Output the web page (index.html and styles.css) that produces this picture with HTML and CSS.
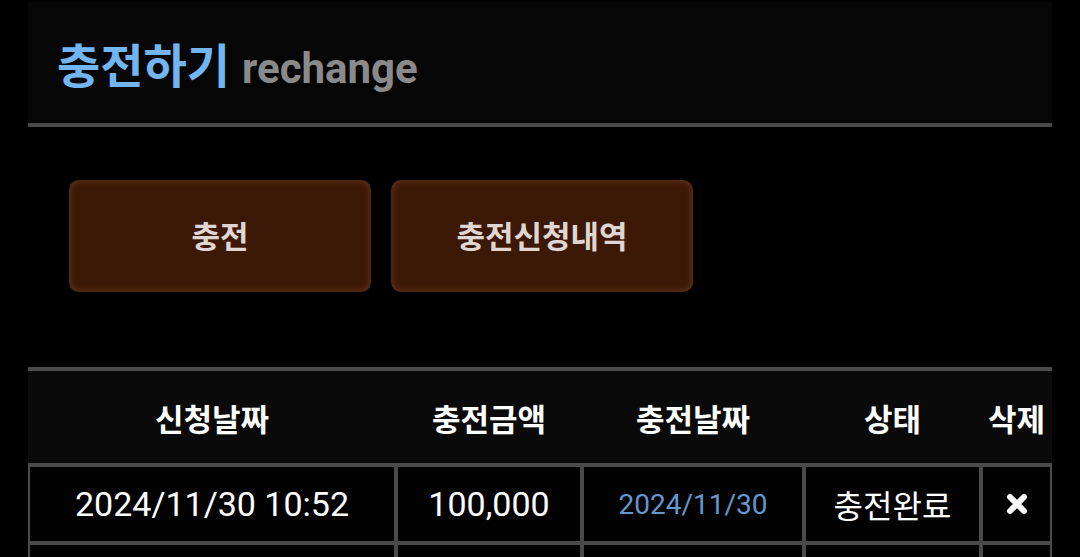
FILE: index.html
```html
<!DOCTYPE html>
<html lang="ko">
<head>
<meta charset="utf-8">
<title>충전하기</title>
<link rel="stylesheet" href="styles.css">
</head>
<body>
<div class="page">
  <header class="panel-head">
    <h1 class="title"><span class="title-ko">충전하기</span><span class="title-en">rechange</span></h1>
  </header>
  <div class="actions">
    <button class="btn">충전</button>
    <button class="btn">충전신청내역</button>
  </div>
  <table class="list">
    <colgroup>
      <col class="c1"><col class="c2"><col class="c3"><col class="c4"><col class="c5">
    </colgroup>
    <thead>
      <tr><th>신청날짜</th><th>충전금액</th><th>충전날짜</th><th>상태</th><th>삭제</th></tr>
    </thead>
    <tbody>
      <tr>
        <td>2024/11/30 10:52</td>
        <td>100,000</td>
        <td class="date-blue">2024/11/30</td>
        <td class="status">충전완료</td>
        <td class="del"><svg width="22" height="22" viewBox="0 0 22 22"><path d="M4 4 L18 18 M18 4 L4 18" stroke="#fff" stroke-width="6" stroke-linecap="round"/></svg></td>
      </tr>
      <tr class="empty">
        <td></td><td></td><td></td><td></td><td></td>
      </tr>
    </tbody>
  </table>
</div>
</body>
</html>
```

FILE: styles.css
```css
html, body {
  margin: 0;
  padding: 0;
  background: #000;
}
body {
  font-family: "Roboto", "Noto Sans CJK KR", sans-serif;
  color: #fff;
}
.page {
  padding: 2px 28px 0 28px;
}
.panel-head {
  background: #060606;
  height: 121px;
  border-bottom: 4px solid #4a4a4a;
  display: flex;
  align-items: center;
  padding-left: 29px;
}
.title {
  margin: 0;
  display: flex;
  align-items: baseline;
  font-weight: 700;
}
.title-ko {
  font-family: "Noto Sans CJK KR", sans-serif;
  font-size: 47px;
  color: #72b5f1;
}
.title-en {
  font-family: "Roboto", sans-serif;
  font-size: 42px;
  color: #8a8a8a;
  margin-left: 12px;
}
.actions {
  display: flex;
  gap: 20px;
  padding: 53px 0 0 41px;
  margin-bottom: 75px;
}
.btn {
  width: 302px;
  height: 112px;
  border: none;
  border-radius: 10px;
  background: #3c1806;
  box-shadow: inset 0 0 7px 1px rgba(130, 80, 50, 0.55);
  color: #e0d6d1;
  font-family: "Noto Sans CJK KR", sans-serif;
  font-weight: 700;
  font-size: 31px;
  padding: 0 0 4px 0;
}
.list {
  width: 1024px;
  table-layout: fixed;
  border-collapse: separate;
  border-spacing: 0;
  border-top: 4px solid #4a4a4a;
}
.c1 { width: 368px; }
.c2 { width: 186px; }
.c3 { width: 222px; }
.c4 { width: 177px; }
.c5 { width: 71px; }
.list th {
  background: #0a0a0a;
  height: 92px;
  padding: 0;
  border-bottom: 2px solid #4a4a4a;
  font-family: "Noto Sans CJK KR", sans-serif;
  font-weight: 700;
  font-size: 31px;
  color: #fff;
  text-align: center;
  vertical-align: middle;
}
.list td {
  background: #020202;
  border: 2px solid #4a4a4a;
  height: 74px;
  padding: 0;
  text-align: center;
  vertical-align: middle;
  font-family: "Roboto", "Noto Sans CJK KR", sans-serif;
  font-size: 34px;
  color: #fff;
}
.list td.date-blue {
  font-size: 28px;
  color: #6497cf;
}
.list td.status {
  font-family: "Noto Sans CJK KR", sans-serif;
  font-size: 32px;
}
.list td.del svg {
  display: block;
  margin: 0 auto;
}
```
